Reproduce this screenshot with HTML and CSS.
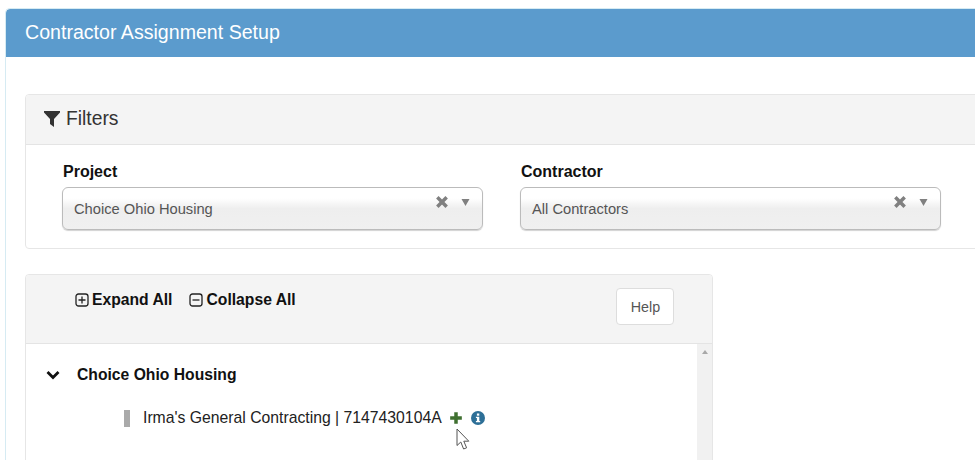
FILE: index.html
```html
<!DOCTYPE html>
<html lang="en">
<head>
<meta charset="utf-8">
<title>Contractor Assignment Setup</title>
<link rel="stylesheet" href="styles.css">
</head>
<body>
<main class="page-panel">
  <header class="page-heading">Contractor Assignment Setup</header>
  <div class="page-body">
    <section class="filters">
      <h2 class="filters-heading">
        <svg class="filter-icon" viewBox="0 0 16 16"><path d="M0 0H16V1.6L10 8V16L6 13V8L0 1.6Z"/></svg>
        Filters
      </h2>
      <div class="filters-body">
        <div class="field">
          <label class="field-label">Project</label>
          <div class="select">
            <span class="select-value">Choice Ohio Housing</span>
            <svg class="select-clear" viewBox="0 0 12 12"><path d="M2 2L10 10M10 2L2 10"/></svg>
            <svg class="select-arrow" viewBox="0 0 8 7"><path d="M0 0H8L4 7Z"/></svg>
          </div>
        </div>
        <div class="field">
          <label class="field-label">Contractor</label>
          <div class="select">
            <span class="select-value">All Contractors</span>
            <svg class="select-clear" viewBox="0 0 12 12"><path d="M2 2L10 10M10 2L2 10"/></svg>
            <svg class="select-arrow" viewBox="0 0 8 7"><path d="M0 0H8L4 7Z"/></svg>
          </div>
        </div>
      </div>
    </section>

    <section class="tree">
      <div class="tree-heading">
        <div class="tree-actions">
          <a class="tree-action">
            <svg class="box-icon" viewBox="0 0 14 14"><rect x="1" y="1" width="12" height="12" rx="2.5"/><path d="M3.5 7H10.5M7 3.5V10.5"/></svg>
            Expand All
          </a>
          <a class="tree-action">
            <svg class="box-icon" viewBox="0 0 14 14"><rect x="1" y="1" width="12" height="12" rx="2.5"/><path d="M3.5 7H10.5"/></svg>
            Collapse All
          </a>
        </div>
        <button class="help-button" type="button">Help</button>
      </div>
      <div class="tree-content">
        <div class="tree-list">
          <div class="tree-project">
            <svg class="chevron" viewBox="0 0 14 10"><path d="M1.5 2L7 7.5L12.5 2"/></svg>
            <span>Choice Ohio Housing</span>
          </div>
          <div class="tree-contractor">
            <span class="contractor-bar"></span>
            <span class="contractor-name">Irma's General Contracting | 7147430104A</span>
            <svg class="plus-icon" viewBox="0 0 12 12"><path d="M6 1V11M1 6H11"/></svg>
            <svg class="info-icon" viewBox="0 0 14 14"><circle cx="7" cy="7" r="7"/><rect class="info-mark" x="5.9" y="2.5" width="2.4" height="2.2"/><path class="info-mark" d="M4.9 5.7H8.3V10H9.2V11.3H4.9V10H5.9V7H4.9Z"/></svg>
          </div>
        </div>
        <div class="scrollbar"><span class="scroll-up"></span></div>
      </div>
    </section>
  </div>
</main>
<svg class="cursor" viewBox="0 0 16 23"><path d="M1 1V17.5L4.8 14L7.6 21L10.6 19.8L7.8 13.2H12.8Z"/></svg>
</body>
</html>
```

FILE: styles.css
```css
* { box-sizing: border-box; }
html { overflow: hidden; }
body {
  margin: 0;
  height: 460px;
  overflow: hidden;
  background: #fff;
  font-family: "Liberation Sans", Arial, sans-serif;
  color: #222;
  position: relative;
}
.page-panel {
  width: 970px;
  height: 452px;
  margin: 8px 0 0 5px;
  border: 1px solid #d6ebf3;
  border-width: 1px 0 0 1px;
  border-radius: 5px 0 0 0;
  overflow: hidden;
}
.page-heading {
  height: 48px;
  padding: 0 19px;
  background: #5b9bcd;
  color: #fff;
  font-size: 19.6px;
  line-height: 47px;
  border-radius: 4px 0 0 0;
}
.page-body { padding: 37px 0 0 19px; }
.filters {
  width: 1000px;
  height: 155px;
  border: 1px solid #e6e6e6;
  border-radius: 4px;
}
.filters-heading {
  display: flex;
  align-items: center;
  gap: 6px;
  margin: 0;
  height: 50px;
  padding: 0 18px 1px;
  background: #f4f4f4;
  border-bottom: 1px solid #e4e4e4;
  font-size: 19.3px;
  font-weight: 400;
  color: #333;
  border-radius: 4px 4px 0 0;
}
.filter-icon { width: 16px; height: 16px; fill: #333; }
.filters-body {
  display: flex;
  gap: 37px;
  padding: 18px 36px 0;
}
.field { width: 421px; }
.field-label {
  display: block;
  padding-left: 1px;
  font-size: 16px;
  font-weight: 700;
  line-height: 18px;
  color: #111;
  margin-bottom: 6px;
}
.select {
  position: relative;
  display: flex;
  height: 43px;
  align-items: center;
  padding: 1px 11px 0;
  border: 1px solid #bbb;
  border-radius: 6px;
  background: linear-gradient(#fff 0, #fff 25%, #eee 50%, #f0f0f0 100%);
  box-shadow: 0 1px 1px rgba(0,0,0,.18);
  font-size: 14.7px;
  color: #555;
}
.select-value { flex: 1; }
.select-clear {
  width: 14px;
  height: 14px;
  margin-top: -14px;
  fill: none;
  stroke: #808080;
  stroke-width: 3;
}
.select-arrow {
  width: 9px;
  height: 7px;
  margin: -14px 1px 0 12px;
  fill: #808080;
}
.tree {
  width: 688px;
  margin-top: 25px;
  border: 1px solid #e6e6e6;
  border-radius: 4px;
}
.tree-heading {
  display: flex;
  justify-content: space-between;
  height: 69px;
  padding: 13px 38px 0 49px;
  background: #f4f4f4;
  border-bottom: 1px solid #e4e4e4;
  border-radius: 4px 4px 0 0;
}
.tree-actions { display: flex; gap: 17px; height: 22px; margin-top: 1px; align-items: center; }
.tree-action {
  display: flex;
  align-items: center;
  gap: 3px;
  font-size: 15.7px;
  font-weight: 700;
  color: #111;
}
.box-icon { width: 14px; height: 14px; fill: none; stroke: #222; stroke-width: 1.3; }
.help-button {
  width: 58px;
  height: 37px;
  border: 1px solid #ddd;
  border-radius: 4px;
  background: #fff;
  font: 14.3px "Liberation Sans", Arial, sans-serif;
  color: #555;
  padding: 0 0 0 1px;
}
.tree-content { display: flex; height: 120px; }
.tree-list { flex: 1; padding-top: 20px; }
.tree-project {
  display: flex;
  align-items: center;
  gap: 17px;
  padding-left: 20px;
  height: 22px;
  font-size: 15.7px;
  font-weight: 700;
  color: #111;
}
.chevron { width: 14px; height: 10px; fill: none; stroke: #111; stroke-width: 2.8; }
.tree-contractor {
  display: flex;
  align-items: center;
  margin-top: 22px;
  padding-left: 98px;
  height: 20px;
  font-size: 15.75px;
  color: #222;
}
.contractor-bar { width: 6px; height: 17px; background: #aaa; margin-right: 13px; }
.plus-icon { width: 14px; height: 14px; margin-left: 7px; fill: none; stroke: #3f7030; stroke-width: 3; }
.info-icon { width: 14px; height: 14px; margin-left: 8px; fill: #2d6f97; }
.info-mark { fill: #fff; }
.scrollbar { width: 15px; background: #f1f1f1; position: relative; }
.scroll-up {
  display: block;
  width: 0;
  margin: 6px auto 0;
  border-left: 3.5px solid transparent;
  border-right: 3.5px solid transparent;
  border-bottom: 4px solid #a8a8a8;
}
.cursor {
  position: absolute;
  left: 456px;
  top: 428px;
  width: 16px;
  height: 23px;
  fill: #fff;
  stroke: #555;
  stroke-width: 1;
}
```
